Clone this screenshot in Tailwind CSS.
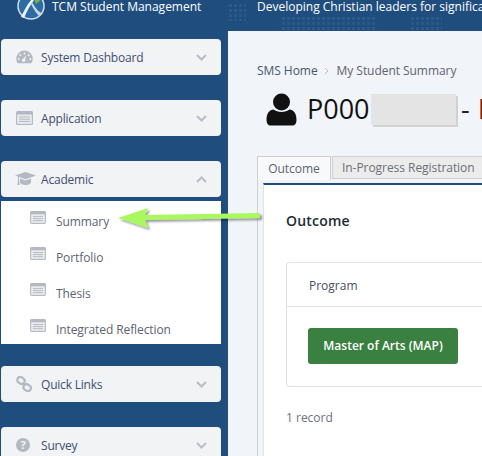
<!DOCTYPE html>
<html lang="en">
<head>
    <meta charset="UTF-8">
    <title>TCM Student Management</title>
    <script src="https://cdn.jsdelivr.net/npm/@tailwindcss/browser@4"></script>
</head>
<body class="w-[482px] h-[456px] overflow-hidden relative bg-[#f1f4f8] font-['Open_Sans','Noto_Sans',sans-serif]">
    <!-- header -->
    <header class="h-[31px] bg-[#1f4e7e] relative overflow-hidden flex items-start">
        <div class="absolute left-[228px] top-[3px] w-[18px] h-[18px] bg-[radial-gradient(#2b5a88_1.6px,transparent_1.8px)] bg-[size:5px_5px]"></div>
        <div class="absolute left-[281px] top-[16px] w-[96px] h-[15px] bg-[radial-gradient(#2b5a88_1.6px,transparent_1.8px)] bg-[size:5px_5px]"></div>
        <div class="absolute left-[410px] top-[16px] w-[32px] h-[15px] bg-[radial-gradient(#2b5a88_1.6px,transparent_1.8px)] bg-[size:5px_5px]"></div>
        <svg class="absolute left-[17px] top-[-8px]" width="28" height="28" viewBox="0 0 28 28">
            <circle cx="14" cy="14" r="13" fill="#2a6ca3" stroke="#d3dde6" stroke-width="1.500"/>
            <path d="M15 1 L26 6 L19 12 Z" fill="#7cb342"/>
            <path d="M4 25 C8 17 11 11 16 6 L18 7 C13 13 10 19 7 26 Z" fill="#eef2f5"/>
            <path d="M15 10 C18 15 21 20 25 21 L22 24 C19 21 16 16 14 12 Z" fill="#c6d5e2"/>
        </svg>
        <span class="relative ml-[52px] w-[205px] shrink-0 text-[12px] leading-[13px] text-white">TCM Student Management</span>
        <span class="relative text-[12px] leading-[13px] text-white whitespace-nowrap">Developing Christian leaders for significa</span>
    </header>

    <div class="flex h-[425px]">
        <!-- sidebar -->
        <aside class="w-[228px] shrink-0 bg-[#1f4e7e] pl-px pr-[7px] pt-2 overflow-hidden">
            <div class="h-9 bg-[#f1f3f5] rounded-[4px] flex items-center pl-[15px] pr-[14px] mb-[25px]">
                <svg class="w-[17px] h-[14px] text-[#b3b9c2]" viewBox="0 0 17 14"><path fill="currentColor" fill-rule="evenodd" d="M8.5 0.5a8.2 8.2 0 0 1 8.2 8.2c0 1.8-.5 3.3-1.4 4.6H1.7C.8 12 .3 10.500.3 8.700A8.200 8.200 0 0 1 8.500.500ZM8.500 2.500a1 1 0 1 0 0 2 1 1 0 0 0 0-2ZM4.300 4.200a1 1 0 1 0 0 2 1 1 0 0 0 0-2ZM12.700 4.200a1 1 0 1 0 0 2 1 1 0 0 0 0-2ZM2.700 8a1 1 0 1 0 0 2 1 1 0 0 0 0-2ZM14.300 8a1 1 0 1 0 0 2 1 1 0 0 0 0-2ZM10.500 5 7.600 8.500a1.700 1.700 0 1 0 1.500.800Z"/></svg>
                <span class="ml-2 pt-0.5 text-[12px] tracking-[-0.2px] text-[#3f4f72] flex-1">System Dashboard</span>
                <svg class="w-[11px] h-[7px] text-[#b8bdc5]" viewBox="0 0 11 7"><path d="M1 1l4.500 4.500L10 1" fill="none" stroke="currentColor" stroke-width="2"/></svg>
            </div>
            <div class="h-9 bg-[#f1f3f5] rounded-[4px] flex items-center pl-[15px] pr-[14px] mb-[25px]">
                <svg class="w-[17px] h-[14px]" viewBox="0 0 17 14"><rect width="17" height="14" rx="1.500" fill="#b3b9c2"/><rect x="1.200" y="3.500" width="14.600" height="9.300" fill="#e9ebee"/><path d="M3 6h11M3 8.200h11M3 10.400h11" stroke="#b3b9c2"/></svg>
                <span class="ml-2 pt-0.5 text-[12px] tracking-[-0.2px] text-[#3f4f72] flex-1">Application</span>
                <svg class="w-[11px] h-[7px] text-[#b8bdc5]" viewBox="0 0 11 7"><path d="M1 1l4.500 4.500L10 1" fill="none" stroke="currentColor" stroke-width="2"/></svg>
            </div>
            <div class="h-9 bg-[#f1f3f5] rounded-[4px] flex items-center pl-[15px] pr-[14px] mb-1">
                <svg class="w-[21px] h-[14px] -ml-px" viewBox="0 0 21 14"><path fill="#b3b9c2" d="M10.500 0 21 3.600 10.500 7.200 4 5v2.500l.6 5.500H2.400L3 7.500V4.600L0 3.600Z"/><path fill="#b3b9c2" d="M5 6.500l5.500 1.900L16 6.500v3.700c0 1.500-2.500 2.800-5.500 2.800S5 11.700 5 10.200Z"/></svg>
                <span class="ml-[5px] pt-0.5 text-[12px] tracking-[-0.2px] text-[#3f4f72] flex-1">Academic</span>
                <svg class="w-[11px] h-[7px] text-[#b8bdc5]" viewBox="0 0 11 7"><path d="M1 6l4.500-4.500L10 6" fill="none" stroke="currentColor" stroke-width="2"/></svg>
            </div>
            <ul class="h-[143px] bg-white mb-[22px] text-[12px] tracking-[-0.1px] text-[#5d6470]">
                <li class="h-9 flex pl-[29px] pt-[12px] leading-[18px]">
                    <svg class="w-4 h-[13px] mt-[-2px]" viewBox="0 0 17 14"><rect width="17" height="14" rx="1.500" fill="#b3b9c2"/><rect x="1.200" y="3.500" width="14.600" height="9.300" fill="#e9ebee"/><path d="M3 6h11M3 8.200h11M3 10.400h11" stroke="#b3b9c2"/></svg>
                    <span class="ml-[10px]">Summary</span>
                </li>
                <li class="h-9 flex pl-[29px] pt-[12px] leading-[18px]">
                    <svg class="w-4 h-[13px] mt-[-2px]" viewBox="0 0 17 14"><rect width="17" height="14" rx="1.500" fill="#b3b9c2"/><rect x="1.200" y="3.500" width="14.600" height="9.300" fill="#e9ebee"/><path d="M3 6h11M3 8.200h11M3 10.400h11" stroke="#b3b9c2"/></svg>
                    <span class="ml-[10px]">Portfolio</span>
                </li>
                <li class="h-9 flex pl-[29px] pt-[12px] leading-[18px]">
                    <svg class="w-4 h-[13px] mt-[-2px]" viewBox="0 0 17 14"><rect width="17" height="14" rx="1.500" fill="#b3b9c2"/><rect x="1.200" y="3.500" width="14.600" height="9.300" fill="#e9ebee"/><path d="M3 6h11M3 8.200h11M3 10.400h11" stroke="#b3b9c2"/></svg>
                    <span class="ml-[10px]">Thesis</span>
                </li>
                <li class="h-[35px] flex pl-[29px] pt-[12px] leading-[18px]">
                    <svg class="w-4 h-[13px] mt-[-2px]" viewBox="0 0 17 14"><rect width="17" height="14" rx="1.500" fill="#b3b9c2"/><rect x="1.200" y="3.500" width="14.600" height="9.300" fill="#e9ebee"/><path d="M3 6h11M3 8.200h11M3 10.400h11" stroke="#b3b9c2"/></svg>
                    <span class="ml-[10px]">Integrated Reflection</span>
                </li>
            </ul>
            <div class="h-9 bg-[#f1f3f5] rounded-[4px] flex items-center pl-[15px] pr-[14px] mb-[25px]">
                <svg class="w-[16px] h-[16px]" viewBox="0 0 16 16"><g fill="none" stroke="#b3b9c2" stroke-width="2.200"><rect x="1.200" y="1.500" width="7.500" height="6" rx="2.800" transform="rotate(35 5 4.500)"/><rect x="7.500" y="8.500" width="7.500" height="6" rx="2.800" transform="rotate(35 11 11.500)"/></g></svg>
                <span class="ml-[9px] pt-0.5 text-[12px] tracking-[-0.2px] text-[#3f4f72] flex-1">Quick Links</span>
                <svg class="w-[11px] h-[7px] text-[#b8bdc5]" viewBox="0 0 11 7"><path d="M1 1l4.500 4.500L10 1" fill="none" stroke="currentColor" stroke-width="2"/></svg>
            </div>
            <div class="h-9 bg-[#f1f3f5] rounded-[4px] flex items-center pl-[15px] pr-[14px]">
                <span class="w-[14px] h-[14px] rounded-full bg-[#b3b9c2] text-[#f1f3f5] text-[11px] leading-[14px] font-bold text-center">?</span>
                <span class="ml-[11px] pt-0.5 text-[12px] tracking-[-0.2px] text-[#3f4f72] flex-1">Survey</span>
                <svg class="w-[11px] h-[7px] text-[#b8bdc5]" viewBox="0 0 11 7"><path d="M1 1l4.500 4.500L10 1" fill="none" stroke="currentColor" stroke-width="2"/></svg>
            </div>
        </aside>

        <!-- content -->
        <main class="flex-1 min-w-0 pl-[29px] overflow-hidden">
            <nav class="flex items-center h-[18px] mt-[31px] text-[12px] tracking-[-0.05px] text-[#5d6470] whitespace-nowrap">
                <span class="text-[#4a5670]">SMS Home</span>
                <svg class="w-[5px] h-2 ml-[6px] mr-[8px] shrink-0" viewBox="0 0 5 8"><path d="M1 1l3 3-3 3" fill="none" stroke="#b8bdc5"/></svg>
                <span>My Student Summary</span>
            </nav>
            <div class="flex items-center mt-[11px] h-[36px] ml-[9px] whitespace-nowrap">
                <svg class="w-[31px] h-[33px] shrink-0" viewBox="0 0 31 33"><circle cx="15.500" cy="9" r="8.500" fill="#111"/><path fill="#111" d="M0.500 27c0-7 3-10 7-10.500 2 1.600 4.800 2.500 8 2.500s6-.9 8-2.500c4 .5 7 3.500 7 10.500 0 3.500-1.500 5.500-4 5.500H4.500c-2.500 0-4-2-4-5.500Z"/></svg>
                <span class="ml-[10px] shrink-0 text-[27px] leading-[36px] text-[#111] w-[64px]">P000</span>
                <span class="shrink-0 w-[85px] h-[31px] bg-[#e4e4e4] shadow-[2px_2px_0_#d2d2d2]"></span>
                <span class="shrink-0 ml-[5px] text-[27px] leading-[36px] text-[#222]">-</span>
                <span class="shrink-0 ml-[8px] text-[27px] leading-[36px] text-[#7a1f1f]">M</span>
            </div>
            <div class="flex mt-[29px] h-[24px] text-[12px] tracking-[-0.05px] whitespace-nowrap">
                <div class="shrink-0 w-[74px] h-[24px] bg-[#f8f9fb] border border-b-0 border-[#cfcfcf] text-[#5d6470] text-center leading-[23px]">Outcome</div>
                <div class="shrink-0 ml-px w-[200px] h-[23px] bg-[#ececec] border border-[#cfcfcf] text-[#6b6f76] pl-[9px] leading-[21px]">In-Progress Registration</div>
            </div>
            <div class="h-[280px] border-l border-[#cfcfcf] pl-[5px] pt-[3px]">
                <div class="h-full bg-white border-l border-[#dfe2e6] border-t-2 border-t-[#1f4e7e] pl-[22px] pt-[26px]">
                    <h2 class="text-[14px] leading-[20px] font-semibold text-[#222b33] tracking-[0.2px]">Outcome</h2>
                    <div class="mt-[31px] w-[240px] h-[125px] border border-r-0 border-[#e0e2e8] rounded-l-[4px]">
                        <div class="h-[44px] border-b border-[#e0e2e8] pl-[22px] pt-[14px] text-[12px] leading-[18px] text-[#44505f]">Program</div>
                        <div class="pl-[21px] pt-[21px]">
                            <span class="block w-[150px] h-[36px] bg-[#3a8040] rounded-[3px] text-white text-[12px] font-semibold text-center leading-[36px]">Master of Arts (MAP)</span>
                        </div>
                    </div>
                    <p class="mt-[22px] text-[12px] leading-[18px] text-[#6b7280]">1 record</p>
                </div>
            </div>
        </main>
    </div>

    <!-- annotation arrow -->
    <svg class="absolute left-[118px] top-[205px]" width="150" height="32" viewBox="0 0 150 32">
        <defs><filter id="s" x="-10%" y="-30%" width="120%" height="170%"><feDropShadow dx="2" dy="2" stdDeviation="1.200" flood-color="#000" flood-opacity="0.4"/></filter></defs>
        <path filter="url(#s)" fill="#aaf860" d="M0 13 30 3 27 10 142 8V13L27 15 30 23Z"/>
    </svg>
</body>
</html>
